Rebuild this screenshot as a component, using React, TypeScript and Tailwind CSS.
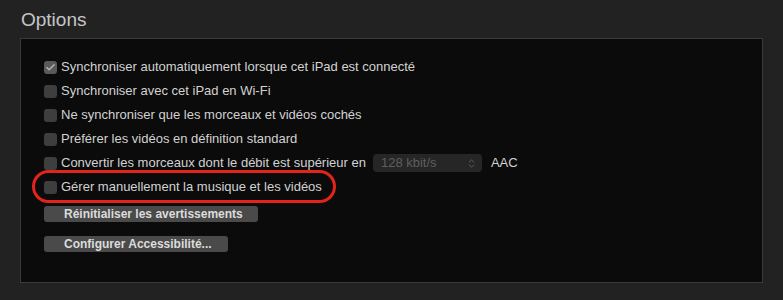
import { Check, ChevronsUpDown } from "lucide-react";

const options = [
  { label: "Synchroniser automatiquement lorsque cet iPad est connecté", checked: true },
  { label: "Synchroniser avec cet iPad en Wi-Fi", checked: false },
  { label: "Ne synchroniser que les morceaux et vidéos cochés", checked: false },
  { label: "Préférer les vidéos en définition standard", checked: false },
];

const Box = ({ checked }: { checked?: boolean }) => (
  <span
    className={`flex h-[13px] w-[13px] shrink-0 items-center justify-center rounded-[3px] ${
      checked ? "bg-[#5a5a5a]" : "bg-[#3e3e3e]"
    }`}
  >
    {checked && <Check size={11} strokeWidth={3} className="text-[#b5b5b5]" />}
  </span>
);

const OptionsPanel = () => {
  return (
    <div className="h-[300px] w-[783px] bg-[#222222] font-['Liberation_Sans',sans-serif]">
      <h1 className="pl-[21px] pt-[9px] text-[19px] leading-[22px] text-[#c6c6c6]">Options</h1>
      <div className="mx-5 mt-[7px] h-[245px] border border-[#3a3a3a] bg-[#0b0b0b] pl-[23px] pt-4 text-[13px] text-[#d2d2d2]">
        {options.map((o) => (
          <div key={o.label} className="flex h-6 items-center gap-1">
            <Box checked={o.checked} />
            <span>{o.label}</span>
          </div>
        ))}
        <div className="flex h-6 items-center gap-1">
          <Box />
          <span>Convertir les morceaux dont le débit est supérieur en</span>
          <div className="ml-[3px] flex h-[18px] w-[109px] items-center justify-between rounded-[4px] bg-[#262626] pl-2 pr-[5px] text-[#5f5f5f]">
            <span>128 kbit/s</span>
            <ChevronsUpDown size={11} strokeWidth={2} className="text-[#5f5f5f]" />
          </div>
          <span className="ml-[5px]">AAC</span>
        </div>
        <div className="relative flex h-6 items-center gap-1">
          <Box />
          <span>Gérer manuellement la musique et les vidéos</span>
          <div className="absolute left-[-12px] top-[-5px] h-[33px] w-[304px] rounded-full border-[3px] border-[#e3241d]" />
        </div>
        <button className="mt-[7px] block h-4 w-[214px] rounded-[3px] bg-[#4a4a4a] pl-5 text-left text-[12px] font-bold leading-4 text-[#dcdcdc]">
          Réinitialiser les avertissements
        </button>
        <button className="mt-[14px] block h-4 w-[184px] rounded-[3px] bg-[#4a4a4a] pl-5 text-left text-[12px] font-bold leading-4 text-[#dcdcdc]">
          Configurer Accessibilité...
        </button>
      </div>
    </div>
  );
};

export default OptionsPanel;
